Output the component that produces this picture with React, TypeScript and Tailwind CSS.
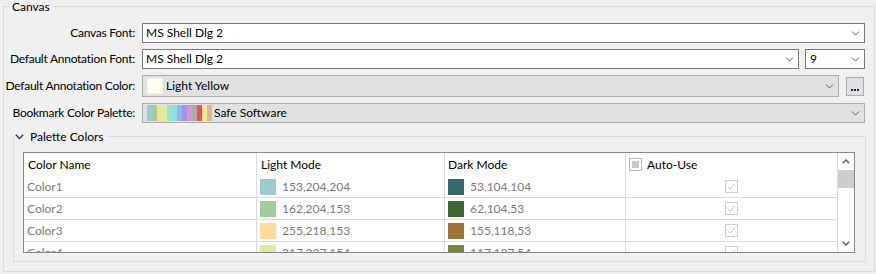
import React from "react";

const Chevron = ({ className = "" }: { className?: string }) => (
  <svg width="9" height="6" viewBox="0 0 9 6" className={className}>
    <path d="M1 1.5 L4.5 5 L8 1.5" fill="none" stroke="#5f5f5f" strokeWidth="1" />
  </svg>
);

const Combo = ({
  children,
  disabled = false,
  className = "",
}: {
  children: React.ReactNode;
  disabled?: boolean;
  className?: string;
}) => (
  <div
    className={
      "flex items-center border " +
      (disabled ? "bg-[#e1e1e1] border-[#adadad] " : "bg-white border-[#7a7a7a] ") +
      className
    }
  >
    <div className="flex-1 flex items-center min-w-0 pl-[3px] whitespace-nowrap">{children}</div>
    <Chevron className="mr-[4px]" />
  </div>
);

const palette = [
  "#99cccc",
  "#a2cc99",
  "#ffda99",
  "#d9ed9a",
  "#99e6c8",
  "#96dce6",
  "#96b4e1",
  "#a096e1",
  "#d296dc",
  "#aaaaaa",
  "#f05050",
  "#fae696",
  "#d7b996",
];

const rows = [
  { name: "Color1", light: "153,204,204", lc: "#99cccc", dark: "53,104,104", dc: "#356868" },
  { name: "Color2", light: "162,204,153", lc: "#a2cc99", dark: "62,104,53", dc: "#3e6835" },
  { name: "Color3", light: "255,218,153", lc: "#ffda99", dark: "155,118,53", dc: "#9b7635" },
  { name: "Color4", light: "217,237,154", lc: "#d9ed9a", dark: "117,137,54", dc: "#758936" },
];

const Check = () => (
  <div className="w-[13px] h-[13px] border border-[#cccccc] bg-white flex items-center justify-center">
    <svg width="11" height="11" viewBox="0 0 11 11">
      <path d="M1.5 5.5 L4 8 L9.5 2.5" fill="none" stroke="#c4c4c4" strokeWidth="1" />
    </svg>
  </div>
);

const Label = ({ children, h }: { children: React.ReactNode; h: string }) => (
  <div className={"w-[137px] shrink-0 pr-[7px] text-right whitespace-nowrap tracking-[-0.25px] " + h}>{children}</div>
);

export default function App() {
  return (
    <div
      className="w-[876px] h-[274px] bg-[#f0f0f0] text-[12px] text-black overflow-hidden"
      style={{ fontFamily: 'Lato, "Noto Sans", sans-serif' }}
    >
      <fieldset className="ml-[3px] w-[871px] border border-[#dcdcdc] pl-[1px] pr-[8px] pt-[10px] pb-[9px]">
        <legend className="ml-[5px] px-[2px] leading-[13px]">Canvas</legend>
        <div className="flex flex-col gap-[6px] pr-[1px]">
          <div className="flex items-center">
            <Label h="leading-[20px]">Canvas Font:</Label>
            <Combo className="flex-1 h-[20px]">MS Shell Dlg 2</Combo>
          </div>
          <div className="flex items-center">
            <Label h="leading-[20px]">Default Annotation Font:</Label>
            <Combo className="flex-1 h-[20px]">MS Shell Dlg 2</Combo>
            <Combo className="w-[60px] h-[20px] ml-[6px]">
              <span className="pl-[1px]">9</span>
            </Combo>
          </div>
          <div className="flex items-center">
            <Label h="leading-[22px]">Default Annotation Color:</Label>
            <Combo disabled className="flex-1 h-[22px]">
              <div className="w-[16px] h-[16px] bg-[#fffff0] border border-[#f3f3e6] ml-[1px]" />
              <span className="ml-[3px]">Light Yellow</span>
            </Combo>
            <div className="ml-[7px] mr-[1px] w-[18px] h-[19px] bg-[#e1e1e1] border border-[#adadad] flex items-end justify-center pb-[4px]">
              <div className="flex gap-[1px]">
                <div className="w-[2px] h-[2px] bg-[#1a1a60]" />
                <div className="w-[2px] h-[2px] bg-[#1a1a60]" />
                <div className="w-[2px] h-[2px] bg-[#1a1a60]" />
              </div>
            </div>
          </div>
          <div className="flex items-center">
            <Label h="leading-[20px]">Bookmark Color Palette:</Label>
            <Combo disabled className="flex-1 h-[20px]">
              <div className="flex ml-[1px]">
                {palette.map((c, i) => (
                  <div key={i} className="w-[5px] h-[16px]" style={{ backgroundColor: c }} />
                ))}
              </div>
              <span className="ml-[2px]">Safe Software</span>
            </Combo>
          </div>
        </div>

        <fieldset className="mt-[7px] ml-[8px] border border-[#dcdcdc] px-0 pt-[9px] pb-[8px]">
          <legend className="ml-0 pl-[1px] pr-[3px] leading-[13px]">
            <div className="flex items-center h-[13px]">
              <svg width="9" height="6" viewBox="0 0 9 6" className="mt-[1px]">
                <path d="M0.8 0.8 L4.5 4.5 L8.2 0.8" fill="none" stroke="#3c3c3c" strokeWidth="1.5" />
              </svg>
              <span className="ml-[6px] whitespace-nowrap">Palette Colors</span>
            </div>
          </legend>
          <div className="ml-[9px] mr-[10px] h-[101px] border border-[#828790] bg-white flex overflow-hidden">
            <div className="w-[814px] flex flex-col overflow-hidden">
              <div className="flex h-[23px] shrink-0">
                <div className="w-[233px] border-r border-[#dadada] pl-[4px] flex items-center">Color Name</div>
                <div className="w-[188px] border-r border-[#dadada] pl-[4px] flex items-center">Light Mode</div>
                <div className="w-[181px] border-r border-[#dadada] pl-[3px] flex items-center">Dark Mode</div>
                <div className="w-[212px] border-r border-[#dadada] pl-[3px] flex items-center">
                  <div className="w-[13px] h-[13px] border border-[#b8b8b8] bg-white flex items-center justify-center">
                    <div className="w-[7px] h-[7px] bg-[#c8c8c8]" />
                  </div>
                  <span className="ml-[5px]">Auto-Use</span>
                </div>
              </div>
              {rows.map((r) => (
                <div key={r.name} className="flex h-[22px] shrink-0 border-b border-[#dadada] text-[#7a7a7a]">
                  <div className="w-[233px] border-r border-[#dadada] pl-[3px] flex items-center">{r.name}</div>
                  <div className="w-[188px] border-r border-[#dadada] pl-[3px] flex items-center">
                    <div className="w-[16px] h-[16px]" style={{ backgroundColor: r.lc }} />
                    <span className="ml-[6px]">{r.light}</span>
                  </div>
                  <div className="w-[181px] border-r border-[#dadada] pl-[3px] flex items-center">
                    <div className="w-[16px] h-[16px]" style={{ backgroundColor: r.dc }} />
                    <span className="ml-[6px]">{r.dark}</span>
                  </div>
                  <div className="w-[212px] border-r border-[#dadada] flex items-center justify-center">
                    <Check />
                  </div>
                </div>
              ))}
            </div>
            <div className="w-[16px] flex flex-col bg-white">
              <div className="h-[17px] flex items-center justify-center">
                <svg width="8" height="5" viewBox="0 0 8 5">
                  <path d="M0.8 4.2 L4 1 L7.2 4.2" fill="none" stroke="#606060" strokeWidth="1.5" />
                </svg>
              </div>
              <div className="h-[18px] bg-[#cdcdcd]" />
              <div className="flex-1" />
              <div className="h-[17px] flex items-center justify-center">
                <svg width="8" height="5" viewBox="0 0 8 5">
                  <path d="M0.8 0.8 L4 4 L7.2 0.8" fill="none" stroke="#606060" strokeWidth="1.5" />
                </svg>
              </div>
            </div>
          </div>
        </fieldset>
      </fieldset>
    </div>
  );
}
